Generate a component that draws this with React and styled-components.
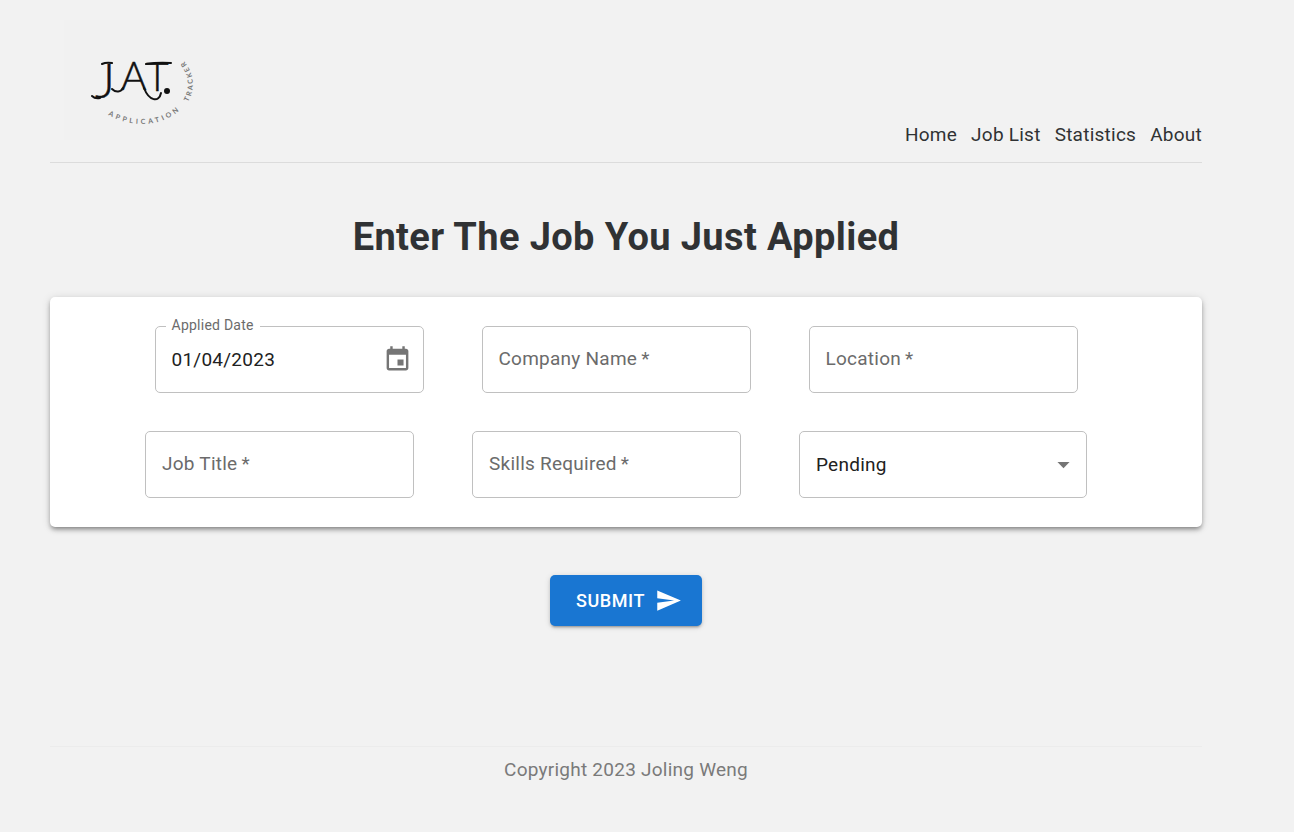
import React, { useState } from "react";
import styled, { createGlobalStyle, css } from "styled-components";

const GlobalStyle = createGlobalStyle`
  *, *::before, *::after { box-sizing: border-box; }
  body {
    margin: 0;
    background: #f2f2f2;
    color: #303234;
    font-family: Roboto, "Liberation Sans", sans-serif;
    font-size: 19px;
    line-height: 28px;
    letter-spacing: 0.013em;
  }
`;

const Page = styled.div`
  padding: 20px 92px 48px 50px;
`;

const Header = styled.header`
  display: flex;
  align-items: flex-end;
  justify-content: space-between;
  padding: 0 0 13px 14px;
  border-bottom: 1px solid #dcdcdc;
`;

const LogoLink = styled.a`
  display: block;
  margin-bottom: 9px;
  background: #f1f1f1;
  color: #111;
`;

const LogoDrawing = styled.svg`
  display: block;
  width: 156px;
  height: 120px;
`;

const Nav = styled.nav`
  display: flex;
  gap: 14px;
`;

const NavLink = styled.a`
  color: inherit;
  text-decoration: none;
`;

const Title = styled.h1`
  margin: 48px 0 34px;
  font-size: 38px;
  line-height: 52px;
  font-weight: 700;
  letter-spacing: 0.01em;
  text-align: center;
`;

const Form = styled.form`
  display: flex;
  flex-direction: column;
  align-items: center;
  gap: 48px;
`;

const Card = styled.div`
  display: flex;
  flex-direction: column;
  gap: 38px;
  width: 100%;
  padding: 29px 20px 29px 0;
  background: #fff;
  border-radius: 5px;
  box-shadow:
    0 3px 4px -2px rgba(0, 0, 0, 0.3),
    0 3px 5px rgba(0, 0, 0, 0.2),
    0 1px 10px rgba(0, 0, 0, 0.12);
`;

const Row = styled.div`
  display: flex;
  justify-content: center;
  gap: 58px;
`;

const Field = styled.div`
  position: relative;
  flex: 0 1 ${(p) => (p.$wide ? 288 : 269)}px;
  display: flex;
  align-items: center;
  height: 67px;
  border: 1px solid #c0c0c0;
  border-radius: 5px;
  &:focus-within { border-color: #1976d2; }
`;

const controlStyle = css`
  flex: 1;
  min-width: 0;
  width: 100%;
  height: 100%;
  padding: 0 16px;
  border: 0;
  outline: 0;
  background: transparent;
  color: #212121;
  font: inherit;
  letter-spacing: inherit;
`;

const floating = css`
  top: -16px;
  left: 10px;
  padding: 0 6px;
  background: #fff;
  font-size: 14px;
`;

const Label = styled.label`
  position: absolute;
  top: 18px;
  left: 16px;
  color: #6b6b6b;
  pointer-events: none;
  ${(p) => p.$float && floating}
`;

const Input = styled.input`
  ${controlStyle}
  &:focus + ${Label}, &:not(:placeholder-shown) + ${Label} { ${floating} }
`;

const Select = styled.select`
  ${controlStyle}
  appearance: none;
`;

const IconButton = styled.button`
  display: flex;
  padding: 0;
  margin-right: 11px;
  border: 0;
  background: none;
  color: #757575;
  cursor: pointer;
`;

const Icon = styled.svg`
  display: block;
  width: ${(p) => p.$size}px;
  height: ${(p) => p.$size}px;
  fill: currentColor;
`;

const SelectArrow = styled(Icon)`
  position: absolute;
  right: 8px;
  color: #757575;
  pointer-events: none;
`;

const SubmitButton = styled.button`
  display: flex;
  align-items: center;
  gap: 10px;
  height: 51px;
  padding: 0 20px 0 26px;
  border: 0;
  border-radius: 5px;
  background: #1976d2;
  color: #fff;
  font: inherit;
  font-size: 18px;
  font-weight: 500;
  letter-spacing: 0.03em;
  box-shadow:
    0 3px 2px -2px rgba(0, 0, 0, 0.2),
    0 2px 3px rgba(0, 0, 0, 0.14),
    0 1px 6px rgba(0, 0, 0, 0.12);
  cursor: pointer;
`;

const Footer = styled.footer`
  margin-top: 120px;
  padding-top: 9px;
  border-top: 1px solid #ececec;
  color: #7a7a7a;
  text-align: center;
`;

function Logo() {
  return (
    <LogoDrawing viewBox="64 20 156 120" role="img" aria-label="JAT. Application Tracker">
      <g
        fill="currentColor"
        stroke="currentColor"
        strokeWidth="0.5"
        fontFamily="Lato, sans-serif"
        fontWeight="300"
        letterSpacing="0"
      >
        <text x="95" y="98" fontSize="48">J</text>
        <text x="121" y="90" fontSize="39">A</text>
        <text x="146" y="91" fontSize="39">T</text>
      </g>
      <g fill="none" stroke="currentColor" strokeWidth="2" strokeLinecap="round">
        <path d="M102 64 Q106 62 112 63" />
        <path d="M92 96 Q95 99 100 98" />
        <path d="M112 89 C116 93 121 92 123 88" />
        <path d="M144 88 C149 101 159 103 161 93" />
        <path d="M146 64 Q158 62 171 63" />
      </g>
      <circle cx="167" cy="91" r="3" fill="currentColor" />
      <path id="logo-arc-low" d="M108 115 C125 125 150 127 166 119 Q179 113 188 102" fill="none" />
      <path id="logo-arc-side" d="M188 102 C195 90 196 74 181 57" fill="none" />
      <g fill="#777" fontFamily="Lato, sans-serif" fontSize="7" fontWeight="700">
        <text letterSpacing="3"><textPath href="#logo-arc-low">APPLICATION</textPath></text>
        <text letterSpacing="2"><textPath href="#logo-arc-side">TRACKER</textPath></text>
      </g>
    </LogoDrawing>
  );
}

function TextField({ id, label, value, onChange, children }) {
  return (
    <Field>
      <Input id={id} placeholder=" " value={value} onChange={onChange} required />
      <Label htmlFor={id} $float={value !== ""}>{label}</Label>
      {children}
    </Field>
  );
}

const links = ["Home", "Job List", "Statistics", "About"];

export default function App() {
  const [job, setJob] = useState({
    date: "01/04/2023",
    company: "",
    location: "",
    title: "",
    skills: "",
    status: "Pending",
  });
  const bind = (key) => ({
    id: key,
    value: job[key],
    onChange: (e) => setJob({ ...job, [key]: e.target.value }),
  });

  return (
    <>
      <GlobalStyle />
      <Page>
        <Header>
          <LogoLink href="#home"><Logo /></LogoLink>
          <Nav>
            {links.map((name) => (
              <NavLink key={name} href={`#${name.toLowerCase().replace(" ", "-")}`}>{name}</NavLink>
            ))}
          </Nav>
        </Header>
        <main>
          <Title>Enter The Job You Just Applied</Title>
          <Form onSubmit={(e) => e.preventDefault()}>
            <Card>
              <Row>
                <TextField label="Applied Date" {...bind("date")}>
                  <IconButton type="button" aria-label="Choose date">
                    <Icon $size={29} viewBox="0 0 24 24" aria-hidden="true">
                      <path d="M17 12h-5v5h5v-5zM16 1v2H8V1H6v2H5c-1.11 0-1.99.9-1.99 2L3 19c0 1.1.89 2 2 2h14c1.1 0 2-.9 2-2V5c0-1.1-.9-2-2-2h-1V1h-2zm3 18H5V8h14v11z" />
                    </Icon>
                  </IconButton>
                </TextField>
                <TextField label={"Company Name\u2009*"} {...bind("company")} />
                <TextField label={"Location\u2009*"} {...bind("location")} />
              </Row>
              <Row>
                <TextField label={"Job Title\u2009*"} {...bind("title")} />
                <TextField label={"Skills Required\u2009*"} {...bind("skills")} />
                <Field $wide>
                  <Select aria-label="Status" {...bind("status")}>
                    <option>Pending</option>
                    <option>Interview</option>
                    <option>Rejected</option>
                    <option>Offer</option>
                  </Select>
                  <SelectArrow $size={29} viewBox="0 0 24 24" aria-hidden="true">
                    <path d="M7 10l5 5 5-5z" />
                  </SelectArrow>
                </Field>
              </Row>
            </Card>
            <SubmitButton type="submit">
              SUBMIT
              <Icon $size={27} viewBox="0 0 24 24" aria-hidden="true">
                <path d="M2.01 21L23 12 2.01 3 2 10l15 2-15 2z" />
              </Icon>
            </SubmitButton>
          </Form>
        </main>
        <Footer>Copyright 2023 Joling Weng</Footer>
      </Page>
    </>
  );
}
